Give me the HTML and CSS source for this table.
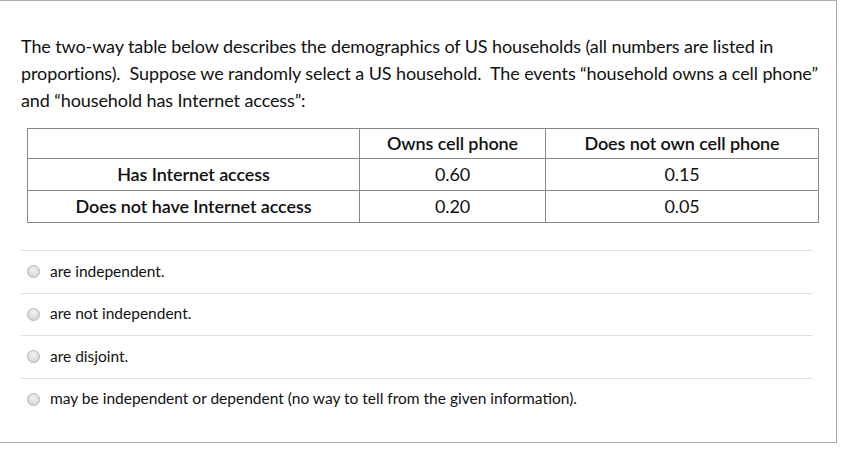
FILE: index.html
```html
<!DOCTYPE html>
<html>
<head>
<meta charset="utf-8">
<link rel="stylesheet" href="styles.css">
</head>
<body>
<div class="card">
  <p class="question">The two-way table below describes the demographics of US households (all numbers are listed in proportions).&nbsp; Suppose we randomly select a US household.&nbsp; The events “household owns a cell phone” and “household has Internet access”:</p>
  <table class="data">
    <colgroup>
      <col class="c1">
      <col class="c2">
      <col class="c3">
    </colgroup>
    <tr class="head">
      <td></td>
      <td class="strong">Owns cell phone</td>
      <td class="strong">Does not own cell phone</td>
    </tr>
    <tr>
      <td class="strong">Has Internet access</td>
      <td>0.60</td>
      <td>0.15</td>
    </tr>
    <tr>
      <td class="strong">Does not have Internet access</td>
      <td>0.20</td>
      <td>0.05</td>
    </tr>
  </table>
  <ul class="options">
    <li class="option"><span class="radio"></span><span class="label">are independent.</span></li>
    <li class="option"><span class="radio"></span><span class="label">are not independent.</span></li>
    <li class="option"><span class="radio"></span><span class="label">are disjoint.</span></li>
    <li class="option"><span class="radio"></span><span class="label">may be independent or dependent (no way to tell from the given information).</span></li>
  </ul>
</div>
</body>
</html>
```
FILE: styles.css
```css
html, body {
  margin: 0;
  padding: 0;
  background: #fff;
}
body {
  font-family: Lato, "Open Sans", sans-serif;
  color: #111;
}
.card {
  box-sizing: border-box;
  width: 837px;
  height: 443px;
  border-top: 1px solid #aaa;
  border-right: 1px solid #aaa;
  border-bottom: 1px solid #aaa;
  padding: 32px 16px 0 21px;
}
.question {
  margin: 0;
  font-size: 18px;
  line-height: 27px;
  letter-spacing: -0.1px;
  width: 800px;
}
.data {
  margin: 14px 0 0 6px;
  border-collapse: collapse;
  border: 1px solid #222;
  width: 792px;
  table-layout: fixed;
  font-size: 18px;
  letter-spacing: -0.1px;
}
.data td {
  border: 1px solid #888;
  text-align: center;
  padding: 0 0 2px 0;
  height: 29px;
}
.data tr.head td {
  height: 27px;
}
.c1 { width: 332px; }
.c2 { width: 186px; }
.strong { font-weight: 600; }
.options {
  list-style: none;
  margin: 27px 0 0 0;
  padding: 0;
  width: 792px;
}
.option {
  display: flex;
  align-items: center;
  height: 42.5px;
  border-top: 1px solid #e0e0e0;
  box-sizing: border-box;
  padding: 0 0 2px 6px;
  font-size: 15.5px;
}
.radio {
  width: 13px;
  height: 13px;
  border-radius: 50%;
  box-sizing: border-box;
  border: 1px solid #b5b5b5;
  background: radial-gradient(circle at 50% 35%, #f4f4f4 0%, #dcdcdc 60%, #cfcfcf 100%);
  margin: 2px 10px 0 0;
  flex: none;
}
.label {
  color: #111;
}
```
